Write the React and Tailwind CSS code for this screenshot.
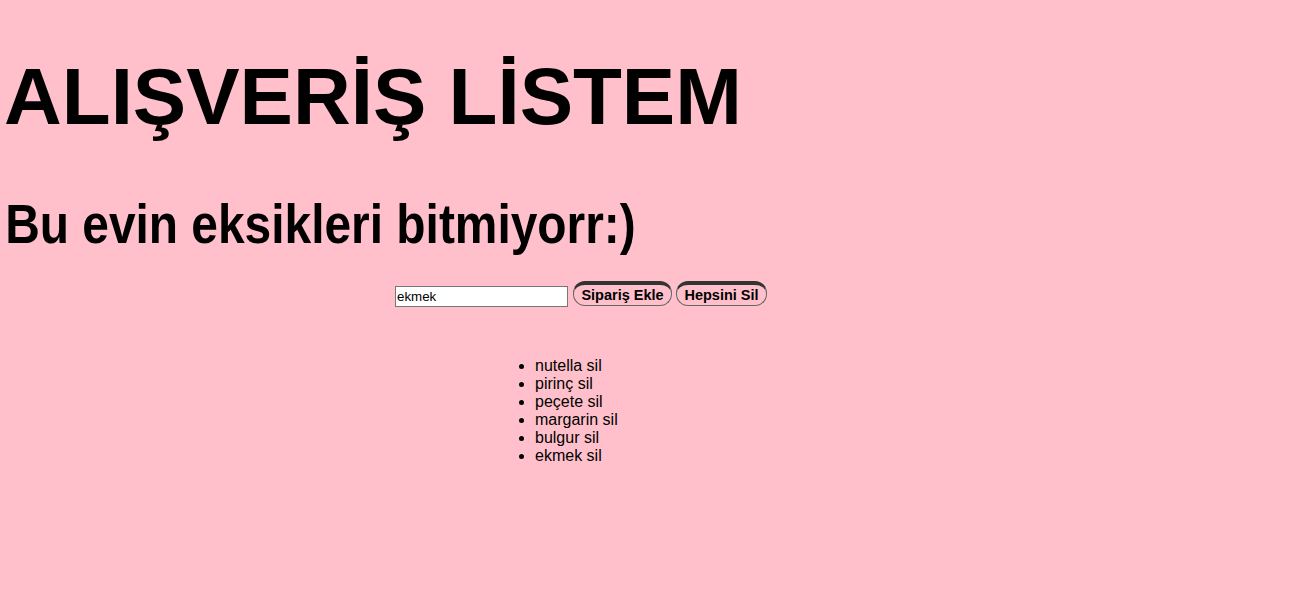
import { useState } from 'react'

export default function App() {
  const [item, setItem] = useState('ekmek')
  const [items, setItems] = useState(['nutella', 'pirinç', 'peçete', 'margarin', 'bulgur', 'ekmek'])

  const handleAdd = () => {
    if (!item.trim()) return
    setItems(prev => [...prev, item])
  }

  const handleDelete = (index) => {
    setItems(prev => prev.filter((_, i) => i !== index))
  }

  return (
    <div className="min-h-[598px] bg-[#ffc0cb] text-black font-['Liberation_Sans',Arial,sans-serif] overflow-hidden">
      <h1 className="pt-[51px] pl-[4px] text-[80px] leading-[92px] font-bold whitespace-nowrap">ALIŞVERİŞ LİSTEM</h1>

      <h2 className="mt-[49px] pl-[6px] text-[56px] leading-[64px] font-bold whitespace-nowrap origin-left scale-x-[0.855]">Bu evin eksikleri bitmiyorr:)</h2>

      {/* sipariş formu */}
      <div className="mt-[25px] ml-[395px] flex items-start">
        <input
          type="text"
          value={item}
          onChange={(e) => setItem(e.target.value)}
          className="mt-[5px] w-[173px] h-[21px] border border-[#767676] bg-white px-[1px] text-[13.33px] leading-[15px] outline-none"
        />
        <button
          onClick={handleAdd}
          className="ml-[5px] h-[25px] w-[99px] rounded-[12px] border border-[#666] border-t-4 border-t-[#333] bg-transparent text-[14.5px] font-bold leading-[16px] pb-[1px] whitespace-nowrap"
        >
          Sipariş Ekle
        </button>
        <button
          onClick={() => setItems([])}
          className="ml-[4px] h-[25px] w-[91px] rounded-[12px] border border-[#666] border-t-4 border-t-[#333] bg-transparent text-[14.5px] font-bold leading-[16px] pb-[1px] whitespace-nowrap"
        >
          Hepsini Sil
        </button>
      </div>

      {/* liste */}
      <ul className="mt-[50px] ml-[495px] pl-10 list-disc text-[16px] leading-[18px]">
        {items.map((name, i) => (
          <li key={i}>
            {name} <span className="cursor-pointer" onClick={() => handleDelete(i)}>sil</span>
          </li>
        ))}
      </ul>
    </div>
  )
}
